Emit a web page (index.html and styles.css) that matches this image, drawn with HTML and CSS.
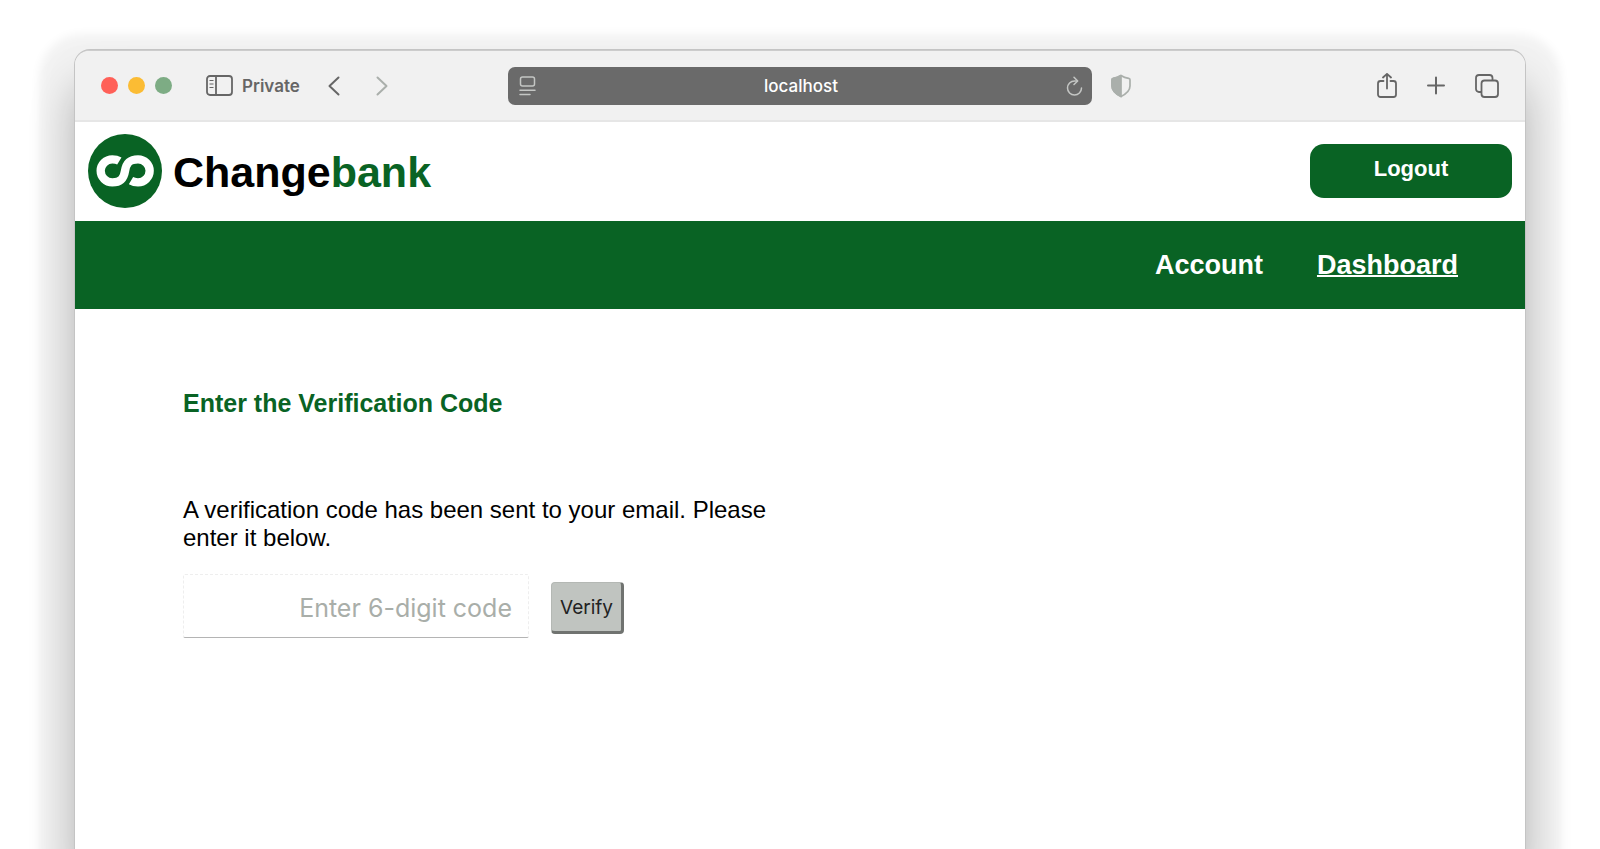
FILE: index.html
```html
<!DOCTYPE html>
<html lang="en">
<head>
<meta charset="utf-8">
<meta name="viewport" content="width=device-width, initial-scale=1">
<title>Changebank</title>
<link rel="stylesheet" href="styles.css">
</head>
<body>
<div class="window">
  <div class="toolbar">
    <div class="toolbar-left">
      <div class="lights"><span class="light red"></span><span class="light yellow"></span><span class="light green"></span></div>
      <button class="tool private" type="button">
        <svg width="27" height="21" viewBox="0 0 27 21" fill="none" stroke="currentColor" stroke-width="1.800"><rect x="1" y="1" width="25" height="19" rx="3"/><path d="M10 1v19"/><path d="M3.500 5.500h4M3.500 9h4M3.500 12.500h4" stroke-width="1.200"/></svg>
        <span>Private</span>
      </button>
      <button class="tool back" type="button" aria-label="Back"><svg width="12" height="20" viewBox="0 0 12 20" fill="none" stroke="currentColor" stroke-width="2" stroke-linecap="round" stroke-linejoin="round"><path d="M10.500 1.500L1.500 10l9 8.500"/></svg></button>
      <button class="tool forward" type="button" aria-label="Forward"><svg width="12" height="20" viewBox="0 0 12 20" fill="none" stroke="currentColor" stroke-width="2" stroke-linecap="round" stroke-linejoin="round"><path d="M1.500 1.500l9 8.500-9 8.500"/></svg></button>
    </div>
    <div class="address">
      <button class="tool" type="button" aria-label="Page menu"><svg width="17" height="20" viewBox="0 0 17 20" fill="none" stroke="currentColor" stroke-width="1.500" stroke-linecap="round"><rect x="1.500" y="1" width="14" height="9" rx="2"/><path d="M1 14.200h15M1 18.500h10"/></svg></button>
      <span class="host">localhost</span>
      <button class="tool" type="button" aria-label="Reload"><svg width="17" height="20" viewBox="0 0 17 20" fill="none" stroke="currentColor" stroke-width="1.500" stroke-linecap="round" stroke-linejoin="round"><path d="M11 5H8.500A7 7 0 1 0 15.500 12"/><path d="M8 1.200l3.700 3.800L8 8.500"/></svg></button>
    </div>
    <div class="toolbar-right">
      <button class="tool shield" type="button" aria-label="Privacy report"><svg width="20" height="24" viewBox="0 0 20 24" fill="none" stroke="currentColor" stroke-width="1.700" stroke-linejoin="round"><path d="M10 1.500C7.800 3 5 4 2.300 4.300 1.500 4.400 1 5 1 5.800V12c0 5 4 8 9 10.500 5-2.500 9-5.500 9-10.500V5.800c0-.8-.5-1.400-1.300-1.500C15 4 12.200 3 10 1.500z"/><path d="M10 1.500C7.800 3 5 4 2.300 4.300 1.500 4.400 1 5 1 5.800V12c0 5 4 8 9 10.500z" fill="currentColor"/></svg></button>
      <div class="actions">
        <button class="tool" type="button" aria-label="Share"><svg width="20" height="26" viewBox="0 0 20 26" fill="none" stroke="currentColor" stroke-width="1.800" stroke-linecap="round" stroke-linejoin="round"><path d="M6.500 8H3.500A2.500 2.500 0 0 0 1 10.500v11a2.500 2.500 0 0 0 2.500 2.500h13A2.500 2.500 0 0 0 19 21.500v-11A2.500 2.500 0 0 0 16.500 8h-3M10 15.500V1M6 4.500l4-3.700 4 3.700"/></svg></button>
        <button class="tool" type="button" aria-label="New tab"><svg width="20" height="20" viewBox="0 0 20 20" fill="none" stroke="currentColor" stroke-width="2" stroke-linecap="round"><path d="M10 1.500v16M2 9.500h16"/></svg></button>
        <button class="tool" type="button" aria-label="Show tabs"><svg width="24" height="24" viewBox="0 0 24 24" fill="none" stroke="currentColor" stroke-width="1.800" stroke-linejoin="round"><rect x="6.500" y="6.500" width="16.500" height="16.500" rx="3"/><path d="M6.500 18H4a3 3 0 0 1-3-3V4a3 3 0 0 1 3-3h10.500a3 3 0 0 1 3 3v2.500"/></svg></button>
      </div>
    </div>
  </div>
  <header class="site-header">
    <a class="brand" href="#">
      <svg class="mark" width="74" height="74" viewBox="55 42 222 222" fill="none" aria-hidden="true"><circle cx="166" cy="153" r="111" fill="#096324"/><path d="M149 123C144 120 137 118 128 118A35 34.500 0 0 0 128 187C156 187 163 172 166 153C169 133 176 118 205 118A35 34.500 0 0 1 205 187C196 187 189 185 184 182" stroke="#fff" stroke-width="25"/></svg>
      <span>Change<b>bank</b></span>
    </a>
    <button class="logout" type="button">Logout</button>
  </header>
  <nav class="site-nav">
    <a href="#">Account</a>
    <a class="current" href="#">Dashboard</a>
  </nav>
  <main class="content">
    <h1>Enter the Verification Code</h1>
    <form class="verify-form">
      <label for="code">A verification code has been sent to your email. Please enter it below.</label>
      <div class="row">
        <input id="code" type="text" placeholder="Enter 6-digit code">
        <button class="verify" type="button">Verify</button>
      </div>
    </form>
  </main>
</div>
</body>
</html>
```

FILE: styles.css
```css
* {
  box-sizing: border-box;
}

body {
  margin: 0;
  min-height: 100vh;
  padding: 50px 75px 0;
  display: flex;
  background: #fff;
  color: #000;
  font-family: "Liberation Sans", Arial, sans-serif;
  overflow-x: hidden;
}

.window {
  flex: 1;
  min-width: 0;
  border-top: 1px solid #ccc;
  border-radius: 15px 15px 0 0;
  background: #fff;
  box-shadow: 0 0 0 1px #c4c4c4, 0 20px 10px 36px rgba(0, 0, 0, 0.05), 0 36px 44px rgba(0, 0, 0, 0.28);
}

button {
  font: inherit;
  cursor: pointer;
}

.tool {
  display: flex;
  align-items: center;
  padding: 0;
  border: 0;
  background: none;
  color: inherit;
}

.toolbar {
  display: grid;
  grid-template-columns: 1fr minmax(200px, 584px) 1fr;
  align-items: center;
  height: 71px;
  padding: 0 26px;
  border-bottom: 2px solid #e6e6e6;
  border-radius: 14px 14px 0 0;
  background: #f1f1f1;
  color: #666;
  font-family: Inter, sans-serif;
}

.toolbar-left,
.toolbar-right,
.actions,
.lights {
  display: flex;
  align-items: center;
}

.lights {
  gap: 10px;
}

.light {
  width: 17px;
  height: 17px;
  border-radius: 50%;
}

.red {
  background: #ff6058;
}

.yellow {
  background: #fbbc34;
}

.green {
  background: #7dac84;
}

.private {
  gap: 9px;
  margin-left: 34px;
  font-size: 17px;
  font-weight: 600;
}

.back {
  margin-left: 28px;
}

.forward {
  margin-left: 36px;
  color: #aaafab;
}

.address {
  display: flex;
  align-items: center;
  justify-content: space-between;
  height: 38px;
  padding: 0 9px 0 11px;
  border-radius: 7px;
  background: #6a6a6a;
  color: #c4c6c4;
}

.host {
  color: #fff;
  font-size: 17px;
  font-weight: 500;
}

.toolbar-right {
  justify-content: space-between;
  padding-left: 19px;
}

.shield {
  color: #aaafab;
}

.actions {
  gap: 29px;
}

.site-header {
  display: flex;
  align-items: center;
  justify-content: space-between;
  padding: 12px 13px 13px;
}

.brand {
  display: flex;
  align-items: center;
  gap: 11px;
  color: #000;
  font-size: 43px;
  font-weight: 700;
  text-decoration: none;
}

.brand span {
  padding-top: 3px;
}

.brand b {
  color: #096324;
}

.mark {
  display: block;
}

.logout {
  width: 202px;
  height: 54px;
  padding: 0 0 4px;
  border: 0;
  border-radius: 14px;
  background: #096324;
  color: #fff;
  font-size: 22px;
  font-weight: 700;
}

.site-nav {
  display: flex;
  align-items: center;
  justify-content: flex-end;
  gap: 54px;
  height: 88px;
  padding: 0 67px;
  background: #096324;
}

.site-nav a {
  color: #fff;
  font-size: 27px;
  font-weight: 700;
  text-decoration: none;
}

.site-nav .current {
  text-decoration: underline;
  text-decoration-thickness: 2px;
}

.content {
  padding: 80px 108px;
}

.content h1 {
  margin: 0;
  color: #096324;
  font-size: 25px;
  line-height: 28px;
}

.verify-form {
  max-width: 600px;
  margin-top: 79px;
}

.verify-form label {
  display: block;
  font-size: 24px;
  line-height: 28px;
}

.row {
  display: flex;
  align-items: center;
  gap: 22px;
  margin-top: 22px;
}

#code {
  width: 346px;
  height: 64px;
  padding: 3px 16px 0;
  border: 1px dashed #eee;
  border-bottom: 1px solid #b4b4b4;
  border-radius: 2px;
  background: #fff;
  font-family: Inter, sans-serif;
  font-size: 25px;
  text-align: right;
}

#code::placeholder {
  color: #a9aea9;
  opacity: 1;
}

.verify {
  height: 52px;
  margin-top: 4px;
  padding: 0 8px;
  border: 1px solid #b4b8b4;
  border-right: 3px solid #707370;
  border-bottom: 3px solid #707370;
  border-radius: 4px;
  background: #c0c4c0;
  color: #222;
  font-family: Inter, sans-serif;
  font-size: 19px;
}
```
